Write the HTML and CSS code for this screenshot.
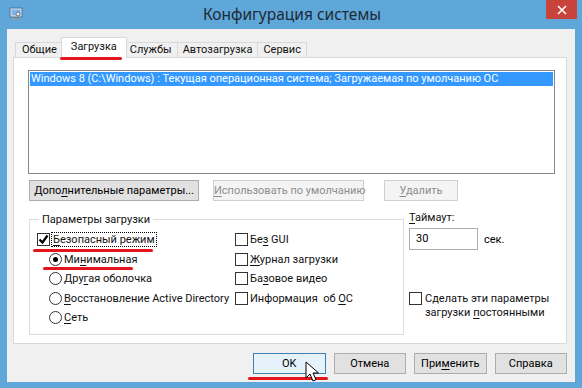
FILE: index.html
```html
<!DOCTYPE html>
<html>
<head>
  <meta charset="utf-8">
  <link rel="stylesheet" href="styles.css">
</head>
<body>
  <div class="window">
    <div class="watermark">SISADMIN.RU</div>

    <div class="titlebar">
      <svg class="app-icon" width="14" height="14" viewBox="0 0 14 14">
        <rect x="1" y="1" width="12" height="9" fill="#dfe9f5" stroke="#55708f"/>
        <rect x="2.5" y="2.5" width="9" height="6" fill="#7fb2e6"/>
        <path d="M4 11h6v2H4z" fill="#8c9aab"/>
        <circle cx="9" cy="7" r="2" fill="#f2f2f2" stroke="#4a5c70" stroke-width="0.8"/>
      </svg>
      <div class="title">Конфигурация системы</div>
      <div class="close-btn">
        <svg width="10" height="10" viewBox="0 0 10 10"><path d="M1 1l8 8M9 1l-8 8" stroke="#fff" stroke-width="1.6"/></svg>
      </div>
    </div>

    <div class="client">
      <div class="tabs">
        <div class="tab">Общие</div>
        <div class="tab active">Загрузка</div>
        <div class="tab">Службы</div>
        <div class="tab">Автозагрузка</div>
        <div class="tab">Сервис</div>
      </div>

      <div class="panel">
        <div class="os-list">
          <div class="os-row selected">Windows 8 (C:\Windows) : Текущая операционная система; Загружаемая по умолчанию ОС</div>
        </div>

        <div class="btn-row">
          <button class="btn btn-advanced">Допо<u>л</u>нительные параметры...</button>
          <button class="btn btn-default" disabled><u>И</u>спользовать по умолчанию</button>
          <button class="btn btn-delete" disabled><u>У</u>далить</button>
        </div>

        <div class="options">
          <fieldset class="boot-group">
            <legend>Параметры загрузки</legend>
            <div class="opt-grid">
              <label class="opt"><span class="check"><svg width="11" height="11" viewBox="0 0 11 11"><path d="M1.5 5.5l3 3 5-7" fill="none" stroke="#000" stroke-width="2.2"/></svg></span><span class="txt focus"><u>Б</u>езопасный режим</span></label>
              <label class="opt"><span class="check"></span><span class="txt">Бе<u>з</u> GUI</span></label>
              <label class="opt sub"><span class="radio on"></span><span class="txt">Ми<u>н</u>имальная</span></label>
              <label class="opt"><span class="check"></span><span class="txt"><u>Ж</u>урнал загрузки</span></label>
              <label class="opt sub"><span class="radio"></span><span class="txt">Дру<u>г</u>ая оболочка</span></label>
              <label class="opt"><span class="check"></span><span class="txt">Ба<u>з</u>овое видео</span></label>
              <label class="opt sub"><span class="radio"></span><span class="txt"><u>В</u>осстановление Active Directory</span></label>
              <label class="opt"><span class="check"></span><span class="txt">Информация&nbsp; об <u>О</u>С</span></label>
              <label class="opt sub"><span class="radio"></span><span class="txt"><u>С</u>еть</span></label>
            </div>
          </fieldset>

          <div class="side">
            <div class="timeout-label"><u>Т</u>аймаут:</div>
            <div class="timeout-row">
              <div class="input">30</div>
              <span>сек.</span>
            </div>
            <label class="opt persist"><span class="check"></span><span class="txt">Сделать эти параметры<br>загрузки <u>п</u>остоянными</span></label>
          </div>
        </div>
      </div>

      <div class="footer">
        <button class="btn btn-ok">OK</button>
        <button class="btn">Отмена</button>
        <button class="btn">При<u>м</u>енить</button>
        <button class="btn">Справка</button>
      </div>
    </div>

    <!-- red marks from the screenshot -->
    <div class="mark mark-tab"></div>
    <div class="mark mark-safe"></div>
    <div class="mark mark-min"></div>
    <div class="mark mark-ok"></div>

    <svg class="cursor" width="14" height="22" viewBox="0 0 14 22">
      <path d="M1 1v16l4-4 3 7 3-1.3-3-6.7h5.5z" fill="#fff" stroke="#000" stroke-width="1"/>
    </svg>
  </div>
</body>
</html>
```

FILE: styles.css
```css
* {
  box-sizing: border-box;
}

body {
  margin: 0;
  font-family: Roboto, "Noto Sans", sans-serif;
  font-size: 11px;
  color: #000;
}

u {
  text-decoration-thickness: 1px;
  text-underline-offset: 2px;
}

.window {
  position: relative;
  width: 582px;
  height: 388px;
  background: #5fa7d8;
  padding: 0 7px 6px 7px;
  overflow: hidden;
}

/* Title bar */
.titlebar {
  height: 29px;
  display: flex;
  align-items: center;
  position: relative;
}

.app-icon {
  margin-left: 2px;
  margin-top: -2px;
}

.title {
  flex: 1;
  text-align: center;
  font-family: "Noto Sans", sans-serif;
  font-size: 15.5px;
  color: #1e2a36;
  margin-left: -14px;
  margin-top: -1px;
}

.close-btn {
  position: absolute;
  right: -2px;
  top: 0;
  width: 31px;
  height: 19px;
  background: #c8433c;
  display: flex;
  align-items: center;
  justify-content: center;
}

/* Client area */
.client {
  position: relative;
  background: #f0f0f0;
  height: 353px;
  padding: 8px 8px 0 6px;
}

.tabs {
  display: flex;
  align-items: flex-end;
  height: 20px;
  padding-left: 2px;
}

.tab {
  height: 15px;
  line-height: 14px;
  padding: 0 5px;
  border: 1px solid #d9d9d9;
  border-bottom: none;
  border-right: none;
  background: #f0f0f0;
  color: #111;
  white-space: nowrap;
}

.tab:first-child {
  padding: 0 6px;
}

.tab:nth-child(5) {
  border-right: 1px solid #d9d9d9;
}

.tab.active {
  height: 21px;
  line-height: 17px;
  margin: 0 -2px -1px -2px;
  padding: 0 9px;
  background: #fff;
  border-right: 1px solid #d9d9d9;
  position: relative;
  z-index: 1;
}

.tab.active + .tab {
  border-left: none;
}

.panel {
  background: #fff;
  border: 1px solid #d9d9d9;
  height: 287px;
  padding: 12px 11px 0 14px;
}

.os-list {
  height: 104px;
  border: 1px solid #828790;
  padding: 1px;
}

.os-row {
  height: 14px;
  line-height: 14px;
  padding-left: 1px;
  white-space: nowrap;
  overflow: hidden;
}

.os-row.selected {
  background: #3399ff;
  color: #fff;
}

/* Buttons */
.btn {
  font-family: inherit;
  font-size: 11px;
  height: 21px;
  padding: 0;
  border: 1px solid #adadad;
  background: #e1e1e1;
  color: #000;
  white-space: nowrap;
}

.btn:disabled {
  background: #f4f4f4;
  border-color: #cfcfcf;
  color: #8d8d8d;
}

.btn-row {
  display: flex;
  margin-top: 6px;
  padding-left: 1px;
}

.btn-advanced {
  width: 170px;
}

.btn-default {
  width: 151px;
  margin-left: 14px;
}

.btn-delete {
  width: 74px;
  margin-left: 20px;
}

/* Boot options */
.options {
  display: flex;
  margin-top: 12px;
}

.boot-group {
  width: 375px;
  height: 122px;
  margin: 0 0 0 1px;
  border: 1px solid #dcdcdc;
  padding: 4px 0 0 7px;
}

.boot-group legend {
  padding: 0 3px;
  margin-left: 2px;
  color: #111;
}

.opt-grid {
  display: grid;
  grid-template-columns: 198px 1fr;
  grid-auto-rows: 19.5px;
}

.opt {
  display: flex;
  align-items: center;
  gap: 2px;
  white-space: nowrap;
  color: #111;
}

.opt.sub {
  padding-left: 12px;
}

.check {
  width: 13px;
  height: 13px;
  border: 1px solid #333;
  background: #fff;
  display: flex;
  align-items: center;
  justify-content: center;
  flex-shrink: 0;
}

.focus {
  outline: 1px dotted #000;
  padding: 0 1px;
}

.radio {
  width: 13px;
  height: 13px;
  border: 1px solid #333;
  border-radius: 50%;
  background: #fff;
  display: flex;
  align-items: center;
  justify-content: center;
  flex-shrink: 0;
}

.radio.on::after {
  content: "";
  width: 5px;
  height: 5px;
  border-radius: 50%;
  background: #000;
}

.side {
  padding-left: 5px;
}

.timeout-label {
  margin-top: -2px;
  height: 15px;
  color: #111;
}

.timeout-row {
  display: flex;
  align-items: center;
  gap: 6px;
  margin-top: 2px;
}

.input {
  width: 69px;
  height: 22px;
  border: 1px solid #abadb3;
  padding: 3px 0 0 6px;
  background: #fff;
}

.persist {
  align-items: flex-start;
  margin-top: 42px;
  line-height: 14px;
  gap: 3px;
}

/* Footer */
.footer {
  display: flex;
  gap: 8px;
  padding: 9px 0 0 240px;
}

.footer .btn {
  width: 73px;
}

.btn-ok {
  background: #e5f1fb;
  border-color: #3c7fb1;
}

/* Screenshot annotations */
.mark {
  position: absolute;
  height: 3px;
  background: #e3141b;
  border-radius: 2px;
  z-index: 2;
}

.mark-tab {
  left: 60px;
  top: 57px;
  width: 62px;
}

.mark-safe {
  left: 33px;
  top: 249px;
  width: 120px;
}

.mark-min {
  left: 43px;
  top: 267px;
  width: 90px;
}

.mark-ok {
  left: 248px;
  top: 377px;
  width: 80px;
}

.cursor {
  position: absolute;
  left: 305px;
  top: 361px;
  z-index: 3;
}

.watermark {
  position: absolute;
  left: 215px;
  top: 168px;
  font-size: 40px;
  font-weight: bold;
  letter-spacing: 2px;
  color: rgba(0, 0, 0, 0.025);
  pointer-events: none;
  z-index: 2;
}
```
